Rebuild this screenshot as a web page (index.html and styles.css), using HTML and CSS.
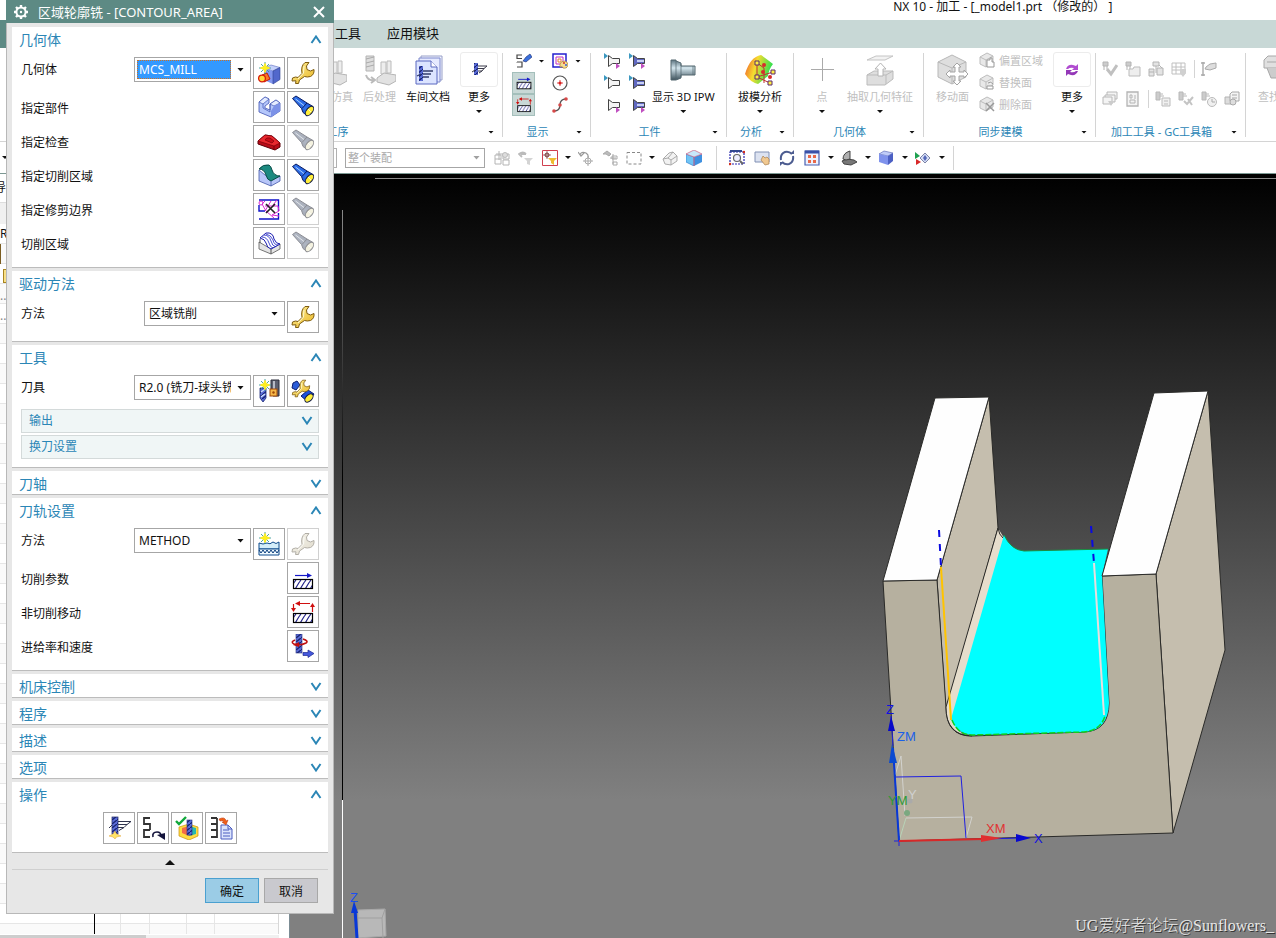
FILE: index.html
```
<!DOCTYPE html>
<html lang="zh-CN">

<head>
  <meta charset="UTF-8">
  <title>NX 10 - 加工</title>
  <link rel="stylesheet" href="styles.css">
</head>

<body>
  <svg class="sprite" aria-hidden="true">
    <defs>
      <linearGradient id="gold" x1="0" y1="0" x2="1" y2="1">
        <stop offset="0" stop-color="#fff2a0" />
        <stop offset="1" stop-color="#e8b420" />
      </linearGradient>
      <linearGradient id="barrel" x1="0" y1="1" x2="1" y2="0">
        <stop offset="0" stop-color="#0a2a9a" />
        <stop offset="0.5" stop-color="#2f72ec" />
        <stop offset="1" stop-color="#0e3cc0" />
      </linearGradient>
      <linearGradient id="steel" x1="0" y1="0" x2="0" y2="1">
        <stop offset="0" stop-color="#5c7480" />
        <stop offset="0.4" stop-color="#d4e6ee" />
        <stop offset="1" stop-color="#3e525c" />
      </linearGradient>
      <linearGradient id="rainbow" x1="0" y1="0" x2="1" y2="0.3">
        <stop offset="0" stop-color="#f04a2a" />
        <stop offset="0.45" stop-color="#f6dc30" />
        <stop offset="1" stop-color="#2ee050" />
      </linearGradient>
      <pattern id="hatch" width="5" height="8" patternUnits="userSpaceOnUse">
        <path d="M-2 9L4 -1M3 9L9 -1" stroke="#22228a" stroke-width="1.1" />
      </pattern>
      <pattern id="thread" width="5" height="4" patternUnits="userSpaceOnUse">
        <rect width="5" height="4" fill="#5a6cd8" />
        <path d="M0 4L5 0" stroke="#14206e" stroke-width="1.3" />
      </pattern>

      <symbol id="up" viewBox="0 0 12 9"><path d="M1.500 8L6 1.500L10.500 8" fill="none" stroke="#2b86b6" stroke-width="2" /></symbol>
      <symbol id="down" viewBox="0 0 12 9"><path d="M1.500 1L6 7.500L10.500 1" fill="none" stroke="#2b86b6" stroke-width="2" /></symbol>
      <symbol id="gear" viewBox="0 0 16 16">
        <circle cx="8" cy="8" r="4.600" fill="none" stroke="#fff" stroke-width="2" />
        <circle cx="8" cy="8" r="1.200" fill="#fff" />
        <path d="M8 1v2M8 13v2M1 8h2M13 8h2M3 3l1.500 1.500M11.500 11.500L13 13M3 13l1.500-1.500M11.500 4.500L13 3" stroke="#fff" stroke-width="2.400" />
      </symbol>
      <symbol id="close" viewBox="0 0 12 12"><path d="M1 1L11 11M11 1L1 11" stroke="#fff" stroke-width="2" /></symbol>

      <symbol id="spark" viewBox="0 0 12 12">
        <path d="M6 0v12M0 6h12M2 2l8 8M10 2l-8 8" stroke="#3a9a9a" stroke-width="0.900" />
        <path d="M6 1.500L7.200 4.500L10.500 6L7.200 7.500L6 10.500L4.800 7.500L1.500 6L4.800 4.500Z" fill="#ffee20" stroke="#ffee20" />
      </symbol>
      <symbol id="wrench" viewBox="0 0 24 24">
        <path d="M14 1.500L18 1.500L15.500 5L16 8.500L19.500 10L23 8.500Q23.500 13.500 19.500 15.500Q16 16.500 13.500 15.500L8.500 19L7.500 22.500L4.500 22.500L5 19.800L1 20L1.500 17L4.500 16L7 16.500L11 12.500Q9.500 5 14 1.500Z" fill="url(#gold)" stroke="#7e5c10" />
        <path d="M13 5L12.500 12L7 18" fill="none" stroke="#fffbd0" />
      </symbol>
      <symbol id="torch" viewBox="0 0 24 24">
        <path d="M1.500 3.500L5 1L16 8L22 11.500L16 20.500L12 17.500L10.500 13.500Z" fill="url(#barrel)" stroke="#0a1c60" />
        <path d="M4.500 4L13 10.500" stroke="#a8d0ff" />
        <path d="M11 13.500L16 8" stroke="#0a1c60" />
        <ellipse cx="18.500" cy="16" rx="3" ry="5.500" transform="rotate(38 18.500 16)" fill="#ffee3a" stroke="#141c40" />
        <path d="M17 14L20 17" stroke="#fffdc8" />
      </symbol>
      <symbol id="newgeom" viewBox="0 0 24 24">
        <path d="M7 7L14 4L23 6.500L16 10Z" fill="#c4d0fa" stroke="#5a6cc0" stroke-width="0.600" />
        <path d="M7 7L16 10V23L7 19Z" fill="#8296ee" />
        <path d="M16 10L23 6.500V18.500L16 23Z" fill="#5268cc" stroke="#2e4090" stroke-width="0.600" />
        <path d="M5 14L10 12L13 18L7 21Z" fill="#f87820" stroke="#c41808" />
        <circle cx="5" cy="17.500" r="3.400" fill="#ffd838" stroke="#d81c08" stroke-width="1.300" />
        <use href="#spark" x="2" y="1" width="12" height="12" />
      </symbol>
      <symbol id="part" viewBox="0 0 24 24">
        <path d="M2 7L8 2L12 4V8L8 11V13L13 15V9L19 5L23 8V16L14 22L2 17Z" fill="#b4c6fa" stroke="#4054b4" stroke-width="0.800" />
        <path d="M2 7L6 9L12 4L8 2ZM13 9L17 11L23 8L19 5Z" fill="#e4ecff" stroke="#4054b4" stroke-width="0.700" />
        <path d="M14 22V16L17 11L23 8V16Z" fill="#7c92e8" />
        <path d="M6 9V13L13 17V9" fill="none" stroke="#4054b4" stroke-width="0.700" />
      </symbol>
      <symbol id="check" viewBox="0 0 24 24">
        <path d="M1 12L8 6L15 7L23 14V18L18 21L1 15Z" fill="#b80c18" stroke="#5e0008" />
        <path d="M1 12L8 6L15 7L23 14L17 17Z" fill="#e8282e" stroke="#7a0008" stroke-width="0.700" />
        <path d="M8 11Q9 8 13 9L17 12L15 14Z" fill="#c80c18" stroke="#7a0008" stroke-width="0.700" />
        <path d="M17 17V21" stroke="#7a0008" />
      </symbol>
      <symbol id="surface" viewBox="0 0 24 24">
        <path d="M2 7V18L14 23L23 18V13L14 17Z" fill="#b8c6f8" stroke="#4458a8" stroke-width="0.800" />
        <path d="M2 6Q6 1 12 2Q14 3 15 7Q17 13 23 13L14 18Q10 17 9 12Q7 6 2 6Z" fill="#1c8a80" stroke="#0c4c48" />
        <path d="M14 18V23" stroke="#4458a8" stroke-width="0.800" />
      </symbol>
      <symbol id="trim" viewBox="0 0 24 24">
        <path d="M2 3H21.500V14M2 8V14H8M2 22H21.500V16" fill="none" stroke="#0c10c8" stroke-width="1.400" />
        <path d="M5 7L9 14L17 21M8 4L5 7M14 4L8 14M20 3L16 8M8 9H21L22 14L15 18L22 19" fill="none" stroke="#d828d0" />
        <circle cx="4" cy="6" r="2" fill="none" stroke="#d828d0" />
        <path d="M9 7L18 16M18 7L9 16" stroke="#222" stroke-width="1.600" />
      </symbol>
      <symbol id="region" viewBox="0 0 24 24">
        <path d="M2 11L2 18L14 23L23 18V13L14 18Z" fill="#e4e4e4" stroke="#555" stroke-width="0.800" />
        <path d="M3 7L9 2Q16 1 17 8Q19 13 23 13L14 18Q10 17 9 12Q8 8 3 7Z" fill="#fff" stroke="#1c1cb0" />
        <path d="M5 6Q10 6 12 12Q13 16 16 17M7 4Q12 4 14 10Q15 15 19 16M9 3Q14 4 16 9Q17 14 21 14" fill="none" stroke="#1c24c8" stroke-width="0.800" />
        <path d="M3 8V12M14 18V23" stroke="#555" />
      </symbol>
      <symbol id="newtool" viewBox="0 0 24 24">
        <path d="M14 1H22V17H16V11H14Z" fill="#5c6070" stroke="#2a2c3a" />
        <path d="M17 2V10" stroke="#cdd2dd" stroke-width="1.600" />
        <rect x="13" y="10" width="7" height="7" fill="#f6b848" stroke="#a04808" />
        <circle cx="16.500" cy="13.500" r="1.200" fill="#a04808" />
        <path d="M3 9H9V19L6 23L3 19Z" fill="url(#thread)" stroke="#1c2a78" stroke-width="0.800" />
        <path d="M4 13L8 10M4 18L8 15" stroke="#cfe0ff" stroke-width="1.500" />
        <use href="#spark" x="2" y="0" width="12" height="12" />
      </symbol>
      <symbol id="tooledit" viewBox="0 0 24 24">
        <path d="M2 4L6 2L9 6L5 11L1 9Z" fill="#2a5cd8" stroke="#0c1e70" />
        <path d="M10 17L17 11L23 15L17 23Z" fill="#1c50dc" stroke="#0c1e70" />
        <ellipse cx="18" cy="19" rx="3" ry="5" transform="rotate(45 18 19)" fill="#ffee3a" stroke="#141c40" />
        <use href="#wrench" x="0" y="0" width="20" height="19" />
      </symbol>
      <symbol id="newmethod" viewBox="0 0 24 24">
        <path d="M2 11V17H22V10Q19 13 16 10Q13 13 10 11Q6 13 2 11Z" fill="#d4eefa" stroke="#0c4a8c" />
        <path d="M2 17H22V23H2Z" fill="#f0faff" stroke="#0c4a8c" />
        <path d="M2 18L4 21L6 18L8 21L10 18L12 21L14 18L16 21L18 18L20 21L22 18" fill="none" stroke="#083c7c" />
        <use href="#spark" x="2" y="0" width="12" height="12" />
      </symbol>
      <symbol id="cutparam" viewBox="0 0 24 24">
        <path d="M4 9.500H18" stroke="#1418c8" stroke-width="1.200" /><path d="M16 7L21 9.500L16 12Z" fill="#1418c8" />
        <rect x="2.500" y="13.500" width="19" height="9" fill="#fff" /><rect x="2.500" y="13.500" width="19" height="9" fill="url(#hatch)" stroke="#000" stroke-width="1.200" />
      </symbol>
      <symbol id="noncut" viewBox="0 0 24 24">
        <path d="M6 3.500H19M2.500 4V9M21.500 12V6" stroke="#d01010" stroke-width="1.200" />
        <path d="M9 1L4 3.500L9 6ZM0 8H5L2.500 12ZM19 7H24L21.500 3Z" fill="#d01010" />
        <rect x="2.500" y="13.500" width="19" height="9" fill="#fff" /><rect x="2.500" y="13.500" width="19" height="9" fill="url(#hatch)" stroke="#000" stroke-width="1.200" />
      </symbol>
      <symbol id="speed" viewBox="0 0 24 24">
        <rect x="5" y="0" width="6" height="19" fill="url(#thread)" stroke="#26307c" stroke-width="0.600" />
        <path d="M4 6Q-1 8 3 10Q9 12 15 9Q18 7 12 5" fill="none" stroke="#c01010" stroke-width="1.600" />
        <path d="M2 11L8 8V13Z" fill="#c01010" />
        <path d="M12 18.500H17V16L23 19.500L17 23.500V21.500H12Z" fill="#4458dc" stroke="#1c2890" stroke-width="0.700" />
      </symbol>
      <symbol id="generate" viewBox="0 0 24 24">
        <rect x="5" y="1" width="6" height="17" fill="url(#thread)" stroke="#1c2460" stroke-width="0.700" />
        <path d="M11 5.500H24L20 8.500H11M20 8.500L17 11.500H11M17 11.500L12 14.500M2 12L5 9" fill="none" stroke="#30344e" />
        <path d="M8 15L9.500 18L14 20L9.500 21L8 23L6 21L2 20L6 18Z" fill="#ffe468" stroke="#e0a030" stroke-width="0.500" />
      </symbol>
      <symbol id="replay" viewBox="0 0 24 24">
        <path d="M9 2H3V8H9V14M9 14H3V21H9M9 8V14" fill="none" stroke="#333" stroke-width="1.800" />
        <path d="M12 21Q11 16 16 16Q20 16 20 20" fill="none" stroke="#14143c" stroke-width="1.600" />
        <path d="M16 19L24 17V24Z" fill="#14143c" />
      </symbol>
      <symbol id="verify" viewBox="0 0 24 24">
        <path d="M4 11L14 8L23 11V20L14 24L4 20Z" fill="#ffdc40" stroke="#c89010" stroke-width="0.700" />
        <path d="M7 12L14 10V20L7 17Z" fill="#f46c48" /><path d="M14 10L21 12V18L14 20Z" fill="#28b8b0" />
        <rect x="12" y="4" width="5" height="15" fill="url(#thread)" stroke="#26307c" stroke-width="0.600" />
        <path d="M1 5L4 8L11 1" fill="none" stroke="#10a83a" stroke-width="2.400" />
      </symbol>
      <symbol id="list" viewBox="0 0 24 24">
        <path d="M8 2H2M8 8H2M8 2V8M8 8V14H2M8 14V21H2" fill="none" stroke="#333" stroke-width="1.800" />
        <path d="M12 9H19L23 13V23H12Z" fill="#dce4fc" stroke="#4a5cc0" />
        <path d="M19 9V13H23M14 14H20M14 17H21M14 20H21" fill="none" stroke="#4a5cc0" />
        <path d="M10 3Q16 0 17 5L19 4L17 9L13 6H15Q14 4 11 5Z" fill="#f06018" stroke="#b83008" stroke-width="0.500" />
      </symbol>

      <symbol id="post" viewBox="0 0 32 32">
        <path d="M2 2H10V17H2Z" fill="#ddd" stroke="#b4b4b4" /><path d="M2 5L10 3M2 9L10 7M2 13L10 11" stroke="#aaa" />
        <path d="M2 21Q4 27 10 26M7 23L11 26L7 29" fill="none" stroke="#bbb" stroke-width="2" />
        <path d="M17 8H22V20H17ZM23 7H27V19H23Z" fill="#eee" stroke="#bbb" /><path d="M13 24L20 19L32 21V27L25 31L13 28Z" fill="#e2e2e2" stroke="#b4b4b4" />
      </symbol>
      <symbol id="shopdoc" viewBox="0 0 32 32">
        <path d="M9 2H30V26H9Z" fill="#f2f4ff" stroke="#98a0c8" /><path d="M7 4H28V28H7Z" fill="#e6eaff" stroke="#7c88cc" />
        <path d="M4 7H19L25 13V30H4Z" fill="#dce4ff" stroke="#5a68c0" /><path d="M19 7V13H25" fill="#fff" stroke="#5a68c0" />
        <rect x="7" y="12" width="4" height="15" fill="url(#thread)" /><path d="M11 17H21M11 20H19M11 23H17M5 22L9 20" stroke="#333c6c" stroke-width="1.300" />
      </symbol>
      <symbol id="moreops" viewBox="0 0 16 16">
        <rect x="3" y="1" width="4" height="12" fill="url(#thread)" /><path d="M7 4H16L13 6.500H7M13 6.500L11 9H7M11 9L8 11M1 10L4 8" fill="none" stroke="#3a3a4a" />
      </symbol>
      <symbol id="pathshow" viewBox="0 0 16 16">
        <path d="M6 2H1V5.500H6M1 9H6V14H1M1 9V9.500M1 14H6" fill="none" stroke="#444" stroke-width="1.200" />
        <path d="M7 8L10 4L14 1L16 4L10 9Z" fill="#3a70dc" stroke="#1c2c70" stroke-width="0.600" />
      </symbol>
      <symbol id="palette" viewBox="0 0 16 16">
        <path d="M1 1H14V14H1Z" fill="#fff" stroke="#2420d0" stroke-width="1.500" /><path d="M4 4H11V11H4Z" fill="none" stroke="#c030c0" />
        <path d="M6 6H9V9H6Z" fill="none" stroke="#e08030" /><path d="M8 11Q9 8 13 8Q16 9 16 12Q15 16 11 15Q11 13 8 14Z" fill="#f4dc90" stroke="#a88430" stroke-width="0.700" />
        <circle cx="12" cy="10" r="0.900" fill="#d02020" /><circle cx="14" cy="12" r="0.900" fill="#2050e0" />
      </symbol>
      <symbol id="target" viewBox="0 0 16 16">
        <circle cx="8" cy="8" r="7" fill="#fff" stroke="#555" stroke-width="1.200" /><path d="M5 8H11M8 5V11" stroke="#e04848" /><circle cx="8" cy="8" r="1.500" fill="#d82020" />
      </symbol>
      <symbol id="spline" viewBox="0 0 16 16">
        <path d="M2 14Q8 14 8 8Q8 2 14 2" fill="none" stroke="#555" stroke-width="1.300" />
        <circle cx="2" cy="14" r="1.800" fill="#d84848" /><circle cx="8" cy="8" r="1.800" fill="#d84848" /><circle cx="14" cy="2" r="1.800" fill="#d84848" />
      </symbol>
      <symbol id="funnel" viewBox="0 0 16 16"><path d="M4.500 2.500L8.500 5.500H15.500V10.500H8.500L4.500 13.500Z" fill="#f4f4f4" stroke="#444" /></symbol>
      <symbol id="funnelfill" viewBox="0 0 16 16"><path d="M4.500 2.500L8.500 5.500H15.500V10.500H8.500L4.500 13.500Z" fill="#6068c0" stroke="#444" /><path d="M8 8H15" stroke="#c8d0f4" stroke-width="2" /></symbol>
      <symbol id="mark-in" viewBox="0 0 16 16"><path d="M0 0L4 3L0 6Z" fill="#3c98c0" /></symbol>
      <symbol id="mark-out" viewBox="0 0 16 16"><path d="M12 10L16 13L12 16Z" fill="#c050c0" /></symbol>
      <symbol id="ipw" viewBox="0 0 32 32"><path d="M4 6H9V7L14 9V12H28V21H14V24L9 26H4Z" fill="url(#steel)" stroke="#52666f" /><path d="M9 7V26M14 10V23M26 12V21" stroke="#52666f" stroke-width="0.700" /></symbol>
      <symbol id="draft" viewBox="0 0 32 32">
        <path d="M1 20Q6 3 17 1Q24 6 29 10Q25 15 24 22L14 30Q6 28 1 20Z" fill="url(#rainbow)" />
        <path d="M13 9V23M13 23L29 18M13 23L26 29M13 9L20 14V29" fill="none" stroke="#c03030" />
        <path d="M11 7H15V11H11ZM11 21H15V25H11ZM27 16H31V20H27ZM24 27H28V31H24Z" fill="#fff040" stroke="#5a2a70" />
        <circle cx="20" cy="11" r="2" fill="#d82c2c" /><circle cx="19" cy="18" r="2" fill="#d82c2c" /><circle cx="26" cy="23" r="2" fill="#d82c2c" />
      </symbol>
      <symbol id="plus" viewBox="0 0 32 32"><path d="M16.500 4V27M5 15.500H28" stroke="#aaa" /></symbol>
      <symbol id="extract" viewBox="0 0 32 32">
        <path d="M3 6L12 2H29L21 6Z" fill="#f2f2f2" stroke="#c4c4c4" /><path d="M3 21L10 17H29V25L21 31H3Z" fill="#dedede" stroke="#bbb" />
        <path d="M3 21H22L29 17M22 21V30" fill="none" stroke="#bbb" /><path d="M14 22V15H11L16.500 9L22 15H19V22Z" fill="#fff" stroke="#b4b4b4" />
      </symbol>
      <symbol id="graycube" viewBox="0 0 16 16">
        <path d="M1 5L8 1L14 4V11L7 15L1 12Z" fill="#e8e8e8" stroke="#bdbdbd" /><path d="M1 5L7 8L14 4M7 8V15" fill="none" stroke="#bdbdbd" />
      </symbol>
      <symbol id="movecube" viewBox="0 0 32 32">
        <path d="M1 8L15 1L29 8V23L15 30L1 23Z" fill="#dedede" stroke="#b8b8b8" /><path d="M1 8L15 14L29 8M15 14V30" fill="none" stroke="#b8b8b8" />
        <path d="M20 9L24 13H22V18H27V16L31 20L27 24V22H22V27H24L20 31L16 27H18V22H13V24L9 20L13 16V18H18V13H16Z" fill="#fff" stroke="#a4a4a4" />
      </symbol>
      <symbol id="cyclepurple" viewBox="0 0 16 16">
        <path d="M2 7Q4 2 9 3L12 4L14 2V8H8L10 6Q6 5 4 7Z" fill="#b04cd0" /><path d="M14 9Q12 14 7 13L4 12L2 14V8H8L6 10Q10 11 12 9Z" fill="#9438b8" />
      </symbol>
      <symbol id="g1" viewBox="0 0 16 16"><path d="M1 1H6V5H1ZM2 5V9M5 5V8" fill="#ccc" stroke="#b4b4b4" /><path d="M5 8L9 13L15 4" fill="none" stroke="#c0c0c0" stroke-width="3" /></symbol>
      <symbol id="g2" viewBox="0 0 16 16"><path d="M1 1H6V5H1ZM2 5V9M5 5V8" fill="#ccc" stroke="#b4b4b4" /><path d="M4 8H8L9 6H15V15H4Z" fill="#eee" stroke="#bbb" /></symbol>
      <symbol id="g3" viewBox="0 0 16 16"><path d="M5 1H11V5H5ZM1 8H6V15H1ZM9 7H15V14H9Z" fill="#e4e4e4" stroke="#b4b4b4" /><path d="M8 5V12M1 11H6M11 4L14 7" stroke="#b4b4b4" /></symbol>
      <symbol id="g4" viewBox="0 0 16 16"><path d="M1 2H14V13H1ZM1 6H14M1 9H14M5 2V13M10 2V13" fill="none" stroke="#c0c0c0" /><path d="M9 8H15V12L12 16L9 12Z" fill="#d0d0d0" /></symbol>
      <symbol id="g5" viewBox="0 0 16 16"><path d="M2 1V15M0 2H4M0 14H4" stroke="#aaa" stroke-width="1.400" /><path d="M5 6L9 3L15 2V7L9 9L4 8Z" fill="#ddd" stroke="#aaa" /></symbol>
      <symbol id="g6" viewBox="0 0 16 16"><path d="M5 1H15V8H5Z" fill="#f4f4f4" stroke="#b8b8b8" /><path d="M3 4H13V11H3Z" fill="#f4f4f4" stroke="#b8b8b8" /><path d="M1 6H10V13H1Z" fill="#f4f4f4" stroke="#b8b8b8" /><path d="M6 10H12L9 15Z" fill="#ccc" /></symbol>
      <symbol id="g7" viewBox="0 0 16 16"><path d="M2 1H13V15H2Z" fill="#f4f4f4" stroke="#b4b4b4" stroke-width="1.300" /><path d="M5 4H7V7H5ZM9 5H11M9 7H11M5 9H10V12H5Z" fill="none" stroke="#b4b4b4" /></symbol>
      <symbol id="g8" viewBox="0 0 16 16"><path d="M1 1H5V9H1ZM5 5H9M5 3H8" fill="#ccc" stroke="#b8b8b8" /><path d="M7 7H15V15H7ZM9 10H13M9 13H13" fill="#f0f0f0" stroke="#bbb" /></symbol>
      <symbol id="g9" viewBox="0 0 16 16"><path d="M1 1H5V9H1ZM5 5H9M5 3H8" fill="#ccc" stroke="#b8b8b8" /><path d="M6 10L9 13L15 6M10 8L14 14" fill="none" stroke="#c4c4c4" stroke-width="2" /></symbol>
      <symbol id="g10" viewBox="0 0 16 16"><path d="M1 1H5V9H1ZM5 5H9M5 3H8" fill="#ccc" stroke="#b8b8b8" /><circle cx="11" cy="11" r="4.500" fill="#f0f0f0" stroke="#bbb" /><path d="M11 8V11H14" fill="none" stroke="#aaa" /></symbol>
      <symbol id="g11" viewBox="0 0 16 16"><path d="M1 6H7V13H1Z" fill="#ddd" stroke="#b4b4b4" /><path d="M8 1H15V10H6V3ZM8 4H13M8 7H13" fill="#f4f4f4" stroke="#a8a8a8" /><circle cx="9" cy="11" r="3" fill="#ddd" stroke="#aaa" /></symbol>
      <symbol id="find" viewBox="0 0 32 32"><path d="M6 2H20V14H2V6Z" fill="#e0e0e0" stroke="#a8a8a8" /><path d="M5 8H20M5 14L9 24H15V14" fill="#ccc" stroke="#a8a8a8" /></symbol>

      <symbol id="s1" viewBox="0 0 16 16"><path d="M1 5H7V14H1ZM1 9H7M5 1V10M2 4H9M9 4H15V9H9ZM9 10H15V15H9Z" fill="none" stroke="#b4b4b4" /><circle cx="11" cy="5" r="2.500" fill="#ddd" stroke="#bbb" /></symbol>
      <symbol id="s2" viewBox="0 0 16 16"><path d="M8 4Q5 1 1 4L4 7M3 4H8" fill="none" stroke="#bbb" stroke-width="1.800" /><path d="M6 8H15L12 11V15L9 14V11Z" fill="#d4d4d4" /></symbol>
      <symbol id="s3" viewBox="0 0 16 16"><path d="M0.500 0.500H15.500V15.500H0.500Z" fill="#fff" stroke="#d04050" /><circle cx="5" cy="5" r="2" fill="none" stroke="#733" /><path d="M5 1V9M1 5H9" stroke="#733" stroke-width="0.700" /><path d="M6 8H15L12 11V15L9 13V11Z" fill="#f0bc30" /></symbol>
      <symbol id="s4" viewBox="0 0 16 16"><path d="M2 5Q3 1 8 3Q11 5 10 8M0 2L3 6L6 3" fill="none" stroke="#999" stroke-width="1.200" /><circle cx="10" cy="11" r="3" fill="none" stroke="#aaa" /><path d="M10 6V16M5 11H15" stroke="#aaa" /></symbol>
      <symbol id="s5" viewBox="0 0 16 16"><path d="M1 4L5 1L9 4L7 6L4 4Z" fill="#bbb" stroke="#aaa" /><path d="M11 4V14M8 8H14M10 6H15V9H10ZM11 12H15V15H11Z" fill="none" stroke="#aaa" /></symbol>
      <symbol id="s6" viewBox="0 0 16 16"><path d="M1 2.500H15V14H1Z" fill="none" stroke="#888" stroke-dasharray="3 2" /></symbol>
      <symbol id="s7" viewBox="0 0 16 16"><path d="M1 9L7 3L11 2L15 6V11L9 15L3 14Z" fill="#f2f2f2" stroke="#aaa" /><path d="M1 9L6 8L11 2M6 8L9 10L15 6M9 10V15" fill="none" stroke="#aaa" /></symbol>
      <symbol id="s8" viewBox="0 0 16 16"><path d="M0 4L8 7V16L0 12Z" fill="#70c4f4" stroke="#3080d0" stroke-width="0.700" /><path d="M8 7L16 4V12L8 16Z" fill="#3f90e0" /><path d="M0 4L8 0L16 4L8 7Z" fill="#c8e8fa" stroke="#d06080" stroke-width="0.700" /><path d="M8 7V16" stroke="#d06080" /></symbol>
      <symbol id="s9" viewBox="0 0 16 16"><path d="M1 2H15V14H1Z" fill="none" stroke="#2828b0" stroke-dasharray="2 1" stroke-width="1.200" /><path d="M1 1H13" stroke="#334890" stroke-width="2" /><circle cx="8" cy="8" r="3.500" fill="#eef" stroke="#666" stroke-width="1.200" /><path d="M11 11L14 14" stroke="#666" stroke-width="2" /><circle cx="15" cy="2" r="1.300" fill="#d03020" /><circle cx="1" cy="14" r="1.300" fill="#d03020" /></symbol>
      <symbol id="s10" viewBox="0 0 16 16"><path d="M1 2H15V12H1Z" fill="#dce2f0" stroke="#8090b4" /><path d="M7 10L9 6L11 8L13 7L15 9V14L11 15Z" fill="#f0c890" stroke="#a88050" stroke-width="0.700" /></symbol>
      <symbol id="s11" viewBox="0 0 16 16"><path d="M2 10Q1 4 6 2Q10 1 13 4M14 6Q15 12 10 14Q6 15 3 12" fill="none" stroke="#4c5c90" stroke-width="2" /><path d="M11 4H15V0ZM5 12H1V16Z" fill="#4c5c90" /></symbol>
      <symbol id="s12" viewBox="0 0 16 16"><path d="M1 1H15V15H1Z" fill="#eef2ff" stroke="#4860b0" stroke-width="1.200" /><path d="M1 2H15" stroke="#3850a8" stroke-width="3" /><path d="M4 5H7V8H4ZM9 5H12V8H9ZM4 10H7V13H4ZM9 10H12V13H9Z" fill="#e86848" /></symbol>
      <symbol id="s13" viewBox="0 0 16 16"><path d="M1 11L6 9L13 10L16 12L10 15L3 14Z" fill="#777" stroke="#444" /><path d="M2 9Q2 3 9 1L9 9L5 10Z" fill="#b0b0b0" stroke="#444" /></symbol>
      <symbol id="s14" viewBox="0 0 16 16"><path d="M1 4L6 1L15 3L10 6Z" fill="#c0ccf8" stroke="#5060b0" stroke-width="0.600" /><path d="M1 4L10 6V15L1 12Z" fill="#7f92ec" /><path d="M10 6L15 3V11L10 15Z" fill="#4c60c4" /></symbol>
      <symbol id="s15" viewBox="0 0 16 16"><path d="M0 2L5 6L0 9Z" fill="#20a050" /><path d="M1 9L6 12L1 15Z" fill="#d82828" /><path d="M5 8L10 3L15 8L10 13Z" fill="#d4dcf4" stroke="#7c84a8" /><path d="M8 8L10 5L12 8L10 11Z" fill="#5468b8" /></symbol>
    </defs>
  </svg>

  <header class="titlebar">NX 10 - 加工 - [_model1.prt （修改的） ]</header>
  <nav class="tabs">
    <span class="tabs-file"></span>
    <a class="tab tab-first" href="#">工具</a>
    <a class="tab" href="#">应用模块</a>
  </nav>

  <div class="ribbon">
    <section class="group group-hidden"></section>
    <section class="group group-ops">
      <div class="group-body group-body_end">
        <button class="tool" disabled><svg class="i32"><use href="#post" /></svg>机床仿真</button>
        <button class="tool" disabled><svg class="i32"><use href="#post" /></svg>后处理</button>
        <button class="tool"><svg class="i32"><use href="#shopdoc" /></svg>车间文档</button>
        <button class="tool tool-more"><span class="more-box"><svg class="i16"><use href="#moreops" /></svg></span>更多<i class="caret"></i></button>
      </div>
      <div class="group-foot"><span>工序</span><i class="caret"></i></div>
    </section>
    <section class="group group-show">
      <div class="group-body">
        <div class="show-grid">
          <button class="mini" aria-label="显示刀轨"><svg class="i16"><use href="#pathshow" /></svg></button><i class="caret"></i>
          <button class="mini" aria-label="颜色"><svg class="i16"><use href="#palette" /></svg></button><i class="caret"></i>
          <button class="mini mini-on" aria-label="切削"><svg class="i16" viewBox="1 5 22 19"><use href="#cutparam" width="24" height="24" /></svg></button><i></i>
          <button class="mini" aria-label="点"><svg class="i16"><use href="#target" /></svg></button><i></i>
          <button class="mini mini-on" aria-label="非切削"><svg class="i16" viewBox="0 1 24 23"><use href="#noncut" width="24" height="24" /></svg></button><i></i>
          <button class="mini" aria-label="曲线"><svg class="i16"><use href="#spline" /></svg></button><i></i>
        </div>
      </div>
      <div class="group-foot"><span>显示</span><i class="caret"></i></div>
    </section>
    <section class="group group-work">
      <div class="group-body">
        <div class="work-grid">
          <button class="mini" aria-label="工件 1"><svg class="i16"><use href="#funnel" /><use href="#mark-in" /><use href="#mark-out" /></svg></button>
          <button class="mini" aria-label="工件 2"><svg class="i16"><use href="#funnelfill" /><use href="#mark-in" /><use href="#mark-out" /></svg></button>
          <button class="mini" aria-label="工件 3"><svg class="i16"><use href="#funnel" /><use href="#mark-in" /></svg></button>
          <button class="mini" aria-label="工件 4"><svg class="i16"><use href="#funnelfill" /><use href="#mark-in" /></svg></button>
          <button class="mini" aria-label="工件 5"><svg class="i16"><use href="#funnel" /><use href="#mark-out" /></svg></button>
          <button class="mini" aria-label="工件 6"><svg class="i16"><use href="#funnelfill" /><use href="#mark-out" /></svg></button>
        </div>
        <button class="tool"><svg class="i32"><use href="#ipw" /></svg>显示 3D IPW<i class="caret"></i></button>
      </div>
      <div class="group-foot"><span>工件</span><i class="caret"></i></div>
    </section>
    <section class="group group-analysis">
      <div class="group-body group-body_center">
        <button class="tool"><svg class="i32"><use href="#draft" /></svg>拔模分析<i class="caret"></i></button>
      </div>
      <div class="group-foot"><span>分析</span><i class="caret"></i></div>
    </section>
    <section class="group group-geom">
      <div class="group-body">
        <button class="tool tool-point" disabled><svg class="i32"><use href="#plus" /></svg>点<i class="caret"></i></button>
        <button class="tool" disabled><svg class="i32"><use href="#extract" /></svg>抽取几何特征<i class="caret"></i></button>
      </div>
      <div class="group-foot"><span>几何体</span><i class="caret"></i></div>
    </section>
    <section class="group group-sync">
      <div class="group-body">
        <button class="tool" disabled><svg class="i32"><use href="#movecube" /></svg>移动面</button>
        <div class="sync-list">
          <button disabled><svg class="i16"><use href="#graycube" /><path d="M8 8H11V6H13V10H15V15H8Z" fill="#fff" stroke="#999" /></svg>偏置区域</button>
          <button disabled><svg class="i16"><use href="#graycube" /><path d="M8 12H14V15H8ZM9 9Q12 7 14 10" fill="#fff" stroke="#999" /></svg>替换面</button>
          <button disabled><svg class="i16"><use href="#graycube" /><path d="M7 7L15 15M15 7L7 15" stroke="#999" stroke-width="1.500" /></svg>删除面</button>
        </div>
        <button class="tool tool-more"><span class="more-box"><svg class="i16"><use href="#cyclepurple" /></svg></span>更多<i class="caret"></i></button>
      </div>
      <div class="group-foot"><span>同步建模</span><i class="caret"></i></div>
    </section>
    <section class="group group-gc">
      <div class="group-body gc-rows">
        <div class="gc-row">
          <svg class="i16"><use href="#g1" /></svg><svg class="i16"><use href="#g2" /></svg><svg class="i16"><use href="#g3" /></svg><svg class="i16"><use href="#g4" /></svg><i class="gc-sep"></i><svg class="i16"><use href="#g5" /></svg>
        </div>
        <div class="gc-row">
          <svg class="i16"><use href="#g6" /></svg><svg class="i16"><use href="#g7" /></svg><i class="gc-sep"></i><svg class="i16"><use href="#g8" /></svg><svg class="i16"><use href="#g9" /></svg><svg class="i16"><use href="#g10" /></svg><svg class="i16"><use href="#g11" /></svg>
        </div>
      </div>
      <div class="group-foot"><span>加工工具 - GC工具箱</span><i class="caret"></i></div>
    </section>
    <section class="group group-find">
      <div class="group-body">
        <button class="tool tool-find" disabled><svg class="i32"><use href="#find" /></svg>查找</button>
      </div>
    </section>
  </div>

  <div class="selbar">
    <i class="caret"></i>
    <span class="selbar-prev"></span>
    <span class="combo combo-off"><select disabled aria-label="选择范围"><option>整个装配</option></select></span>
    <div class="selbar-icons">
      <svg class="i16"><use href="#s1" /></svg><svg class="i16"><use href="#s2" /></svg><svg class="i16"><use href="#s3" /></svg><i class="caret"></i><svg class="i16"><use href="#s4" /></svg><svg class="i16"><use href="#s5" /></svg><svg class="i16"><use href="#s6" /></svg><i class="caret"></i><svg class="i16"><use href="#s7" /></svg><svg class="i16"><use href="#s8" /></svg>
    </div>
    <div class="selbar-icons selbar-icons_view">
      <svg class="i16"><use href="#s9" /></svg><svg class="i16"><use href="#s10" /></svg><svg class="i16"><use href="#s11" /></svg><svg class="i16"><use href="#s12" /></svg><i class="caret"></i><svg class="i16"><use href="#s13" /></svg><i class="caret"></i><svg class="i16"><use href="#s14" /></svg><i class="caret"></i><svg class="i16"><use href="#s15" /></svg><i class="caret"></i>
    </div>
  </div>

  <main class="work">
    <aside class="navigator">
      <div class="nav-title">导</div>
      <div class="nav-head"></div>
      <div class="nav-rows">
        <div class="nav-row">R</div>
        <div class="nav-row nav-row_program"></div>
        <div class="nav-row nav-row_folder"></div>
        <div class="nav-row nav-row_dots">..</div>
        <div class="nav-row nav-row_dots">..</div>
        <div class="nav-cols"><i></i><i></i><i></i><i></i><i></i></div>
      </div>
      <div class="nav-scroll"></div>
    </aside>
    <div class="viewport">
      <svg class="scene" viewBox="290 174 986 764">
        <path d="M375 178.500H1276" stroke="#8a8a8a" />
        <linearGradient id="edge" x1="0" y1="210" x2="0" y2="480" gradientUnits="userSpaceOnUse">
          <stop offset="0" stop-color="#8a8a8a" />
          <stop offset="1" stop-color="#000" />
        </linearGradient>
        <rect x="342" y="210" width="1" height="590" fill="url(#edge)" />
        <rect x="342" y="800" width="1" height="138" fill="#fff" />

        <!-- part body -->
        <g stroke="#2a2a28" stroke-linejoin="round">
          <path d="M989 397L998 528L946 712L937 580Z" fill="#c5beae" />
          <path d="M1208 391L1225 650L1173 833L1156 574Z" fill="#c5beae" />
          <path d="M883 581L937 580L946 707Q946 736 972 736L1084 732Q1109 731 1109 703L1102 576L1156 574L1173 833L899 841Z" fill="#b6b09f" />
        </g>
        <path d="M998 528L1004 538L952 720L962 734Q946 728 946 707Z" fill="#e6ddcc" />
        <path d="M998 528L946 707M998 528Q999 535 1003 538M946 707Q946 736 972 736" fill="none" stroke="#2a2a28" />
        <path d="M1004 535Q1011 550 1024 551L1108 549L1102 576L1109 703Q1108 731 1084 732L972 735Q956 733 951 719Z" fill="#00ffff" />
        <path d="M1004 535Q1011 550 1024 551L1108 549" fill="none" stroke="#1c8c40" />
        <path d="M952 720Q958 735 972 735L1084 732Q1101 730 1105 716" fill="none" stroke="#10d020" stroke-width="1.500" stroke-dasharray="6 2" />
        <g fill="#fefefe" stroke="#2a2a28" stroke-linejoin="round">
          <path d="M935 398L989 397L937 580L883 581Z" />
          <path d="M1154 393L1208 391L1156 574L1102 576Z" />
        </g>
        <path d="M941 567L951 720" stroke="#ffc400" stroke-width="2" />
        <path d="M1094 563L1104 715" stroke="#e8dede" stroke-width="2" />
        <path d="M939 530L941 567M1091 526L1094 563" stroke="#0a0ae0" stroke-width="2" stroke-dasharray="7 7" />

        <!-- coordinate systems -->
        <g fill="none" stroke="#d2d2ce">
          <path d="M895 775L901 756L905 816M906 818L972 817L966 838" />
          <path d="M899 841L906 818" stroke="#b8d4b8" />
        </g>
        <path d="M896 777L961 776L966 838M891 716L893 746M894 841H904M899 836V846M984 839L1020 838" fill="none" stroke="#2020e0" />
        <path d="M893 748L899 841" stroke="#0838d8" stroke-width="2" />
        <path d="M892 744L889 763H897Z" fill="#0a4ad0" />
        <path d="M891 716L888 731H895Z" fill="#0808c8" />
        <path d="M899 841L984 839" stroke="#d82828" stroke-width="2" />
        <path d="M1002 838L981 835V842Z" fill="#e03030" />
        <path d="M1031 838L1016 834V842Z" fill="#0808d0" />
        <circle cx="910" cy="801" r="2.500" fill="#aaa" />
        <circle cx="907" cy="813" r="3" fill="#7aa880" />
        <g class="scene-text">
          <text x="886" y="714" fill="#1010e0">Z</text>
          <text x="897" y="741" fill="#1a60e8">ZM</text>
          <text x="888" y="805" fill="#2c9a38">YM</text>
          <text x="908" y="799" fill="#d0d0d0">Y</text>
          <text x="986" y="833" fill="#e03434">XM</text>
          <text x="1034" y="843" fill="#1010e0">X</text>
          <text x="350" y="902" fill="#1a50f0">Z</text>
        </g>

        <!-- view triad -->
        <path d="M358 910L385 909L386 936L358 938Z" fill="#b8b8b8" stroke="#a8a8a8" />
        <path d="M358 918L382 918L385 909M382 918L383 938" fill="none" stroke="#a0a0a0" />
        <path d="M355 910L357 938" stroke="#0838d8" stroke-width="3" />
        <path d="M354 901L351 913H358Z" fill="#0838d8" />
      </svg>
      <div class="watermark">UG爱好者论坛@Sunflowers_</div>
    </div>
  </main>

  <form class="dialog">
    <div class="dialog-title">
      <svg class="i16"><use href="#gear" /></svg>
      <span>区域轮廓铣 - [CONTOUR_AREA]</span>
      <button type="button" class="dialog-close" aria-label="关闭"><svg><use href="#close" /></svg></button>
    </div>
    <div class="dialog-body">
      <section class="panel">
        <h2>几何体<svg class="chev"><use href="#up" /></svg></h2>
        <div class="panel-body">
          <div class="row row-field">
            <label for="geometry">几何体</label>
            <span class="combo combo-focus"><select id="geometry"><option>MCS_MILL</option></select></span>
            <button type="button" class="btn" aria-label="新建几何体"><svg><use href="#newgeom" /></svg></button>
            <button type="button" class="btn" aria-label="编辑"><svg><use href="#wrench" /></svg></button>
          </div>
          <div class="row"><span>指定部件</span>
            <button type="button" class="btn" aria-label="指定部件"><svg><use href="#part" /></svg></button>
            <button type="button" class="btn" aria-label="显示"><svg><use href="#torch" /></svg></button>
          </div>
          <div class="row"><span>指定检查</span>
            <button type="button" class="btn" aria-label="指定检查"><svg><use href="#check" /></svg></button>
            <button type="button" class="btn" aria-label="显示" disabled><svg><use href="#torch" /></svg></button>
          </div>
          <div class="row"><span>指定切削区域</span>
            <button type="button" class="btn" aria-label="指定切削区域"><svg><use href="#surface" /></svg></button>
            <button type="button" class="btn" aria-label="显示"><svg><use href="#torch" /></svg></button>
          </div>
          <div class="row"><span>指定修剪边界</span>
            <button type="button" class="btn" aria-label="指定修剪边界"><svg><use href="#trim" /></svg></button>
            <button type="button" class="btn" aria-label="显示" disabled><svg><use href="#torch" /></svg></button>
          </div>
          <div class="row"><span>切削区域</span>
            <button type="button" class="btn" aria-label="切削区域"><svg><use href="#region" /></svg></button>
            <button type="button" class="btn" aria-label="显示" disabled><svg><use href="#torch" /></svg></button>
          </div>
        </div>
      </section>

      <section class="panel">
        <h2>驱动方法<svg class="chev"><use href="#up" /></svg></h2>
        <div class="panel-body">
          <div class="row row-field">
            <label for="drive">方法</label>
            <span class="combo combo-wide"><select id="drive"><option>区域铣削</option></select></span>
            <button type="button" class="btn" aria-label="编辑"><svg><use href="#wrench" /></svg></button>
          </div>
        </div>
      </section>

      <section class="panel">
        <h2>工具<svg class="chev"><use href="#up" /></svg></h2>
        <div class="panel-body">
          <div class="row row-field">
            <label for="cutter">刀具</label>
            <span class="combo"><select id="cutter"><option>R2.0 (铣刀-球头铣)</option></select></span>
            <button type="button" class="btn" aria-label="新建刀具"><svg><use href="#newtool" /></svg></button>
            <button type="button" class="btn" aria-label="编辑刀具"><svg><use href="#tooledit" /></svg></button>
          </div>
          <h3>输出<svg class="chev"><use href="#down" /></svg></h3>
          <h3>换刀设置<svg class="chev"><use href="#down" /></svg></h3>
        </div>
      </section>

      <section class="panel">
        <h2>刀轴<svg class="chev"><use href="#down" /></svg></h2>
      </section>

      <section class="panel">
        <h2>刀轨设置<svg class="chev"><use href="#up" /></svg></h2>
        <div class="panel-body">
          <div class="row row-field">
            <label for="method">方法</label>
            <span class="combo"><select id="method"><option>METHOD</option></select></span>
            <button type="button" class="btn" aria-label="新建方法"><svg><use href="#newmethod" /></svg></button>
            <button type="button" class="btn" aria-label="编辑" disabled><svg><use href="#wrench" /></svg></button>
          </div>
          <div class="row"><span>切削参数</span>
            <button type="button" class="btn" aria-label="切削参数"><svg><use href="#cutparam" /></svg></button>
          </div>
          <div class="row"><span>非切削移动</span>
            <button type="button" class="btn" aria-label="非切削移动"><svg><use href="#noncut" /></svg></button>
          </div>
          <div class="row"><span>进给率和速度</span>
            <button type="button" class="btn" aria-label="进给率和速度"><svg><use href="#speed" /></svg></button>
          </div>
        </div>
      </section>

      <section class="panel">
        <h2>机床控制<svg class="chev"><use href="#down" /></svg></h2>
      </section>
      <section class="panel">
        <h2>程序<svg class="chev"><use href="#down" /></svg></h2>
      </section>
      <section class="panel">
        <h2>描述<svg class="chev"><use href="#down" /></svg></h2>
      </section>
      <section class="panel">
        <h2>选项<svg class="chev"><use href="#down" /></svg></h2>
      </section>

      <section class="panel">
        <h2>操作<svg class="chev"><use href="#up" /></svg></h2>
        <div class="panel-body">
          <div class="actions">
            <button type="button" class="btn" aria-label="生成"><svg><use href="#generate" /></svg></button>
            <button type="button" class="btn" aria-label="重播"><svg><use href="#replay" /></svg></button>
            <button type="button" class="btn" aria-label="确认"><svg><use href="#verify" /></svg></button>
            <button type="button" class="btn" aria-label="列表"><svg><use href="#list" /></svg></button>
          </div>
        </div>
      </section>
      <div class="collapse"><i></i></div>
      <div class="dialog-foot">
        <button type="button" class="ok">确定</button>
        <button type="button" class="cancel">取消</button>
      </div>
    </div>
  </form>
</body>

</html>
```
FILE: styles.css
```
* {
  box-sizing: border-box;
}

body {
  margin: 0;
  min-height: 100vh;
  display: flex;
  flex-direction: column;
  position: relative;
  overflow-x: hidden;
  background: #fff;
  color: #111;
  font: 12px "Noto Sans", "Noto Sans CJK SC", sans-serif;
}

button,
select {
  font: inherit;
  color: inherit;
  margin: 0;
  padding: 0;
  border: 0;
  background: none;
}

svg {
  display: block;
  flex: none;
}

.sprite {
  position: absolute;
  width: 0;
  height: 0;
}

.i16 {
  width: 16px;
  height: 16px;
}

.i32 {
  width: 32px;
  height: 32px;
}

.caret {
  width: 6px;
  height: 3px;
  flex: none;
  background: #111;
  clip-path: polygon(0 0, 100% 0, 50% 100%);
}

/* 标题栏和选项卡 */
.titlebar {
  height: 20px;
  padding-left: 70%;
  line-height: 14px;
  white-space: pre;
}

.tabs {
  height: 28px;
  display: flex;
  align-items: center;
  background: #c8d8d6;
  font-size: 13px;
  line-height: 26px;
}

.tabs-file {
  width: 56px;
  height: 28px;
  background: #5d8a84;
}

.tab {
  height: 28px;
  color: #111;
  text-decoration: none;
  margin-right: 26px;
}

.tab-first {
  margin-left: 279px;
}

/* 功能区 */
.ribbon {
  height: 94px;
  display: flex;
  overflow: hidden;
  border-bottom: 1px solid #d4d4d4;
  font-size: 11px;
}

.group {
  flex: none;
  display: flex;
  flex-direction: column;
  margin: 5px 0 4px;
  border-right: 1px solid #d4d4d4;
}

.group-hidden {
  width: 191px;
}

.group-ops {
  width: 312px;
}

.group-show {
  width: 88px;
}

.group-work {
  width: 136px;
}

.group-analysis {
  width: 67px;
}

.group-geom {
  width: 130px;
}

.group-sync {
  width: 172px;
}

.group-gc {
  width: 150px;
}

.group-find {
  border: 0;
}

.group-body {
  flex: 1;
  display: flex;
  align-items: flex-start;
}

.group-body_end {
  justify-content: flex-end;
  gap: 10px;
  padding-right: 4px;
}

.group-body_center {
  justify-content: center;
}

.group-foot {
  height: 16px;
  margin-bottom: -3px;
  display: flex;
  align-items: center;
  color: #2b86b6;
  padding-right: 8px;
}

.group-foot span {
  flex: 1;
  text-align: center;
  line-height: 16px;
  padding-right: 4px;
  white-space: nowrap;
}

.tool {
  display: flex;
  flex-direction: column;
  align-items: center;
  line-height: 16px;
  padding-top: 1px;
  white-space: nowrap;
}

.tool > .caret {
  margin-top: 5px;
}

.tool > .i32 {
  margin-bottom: 3px;
}

.tool:disabled,
.sync-list button:disabled {
  color: #c0c0c0;
}

.tool-more {
  padding-top: 0;
}

.more-box {
  width: 38px;
  height: 35px;
  margin: -1px 0 2px;
  display: flex;
  align-items: center;
  justify-content: center;
  border: 1px solid #ececec;
  border-radius: 3px;
}

.mini {
  height: 22px;
  display: flex;
  align-items: center;
  justify-content: center;
}

.mini-on {
  background: #c8d8d6;
  border: 1px solid #a4bfbb;
}

.show-grid {
  display: grid;
  grid-template-columns: 23px 13px 24px 12px;
  grid-auto-rows: 22px;
  align-items: center;
  justify-items: stretch;
  padding-left: 9px;
  margin-top: -3px;
}

.show-grid .caret {
  justify-self: center;
}

.work-grid {
  display: grid;
  grid-template-columns: 25px 25px;
  grid-auto-rows: 22px;
  padding-left: 8px;
  margin: -3px 3px 0 0;
}

.group-geom .group-body {
  gap: 6px;
  padding-left: 9px;
}

.tool-point {
  width: 38px;
}

.group-sync .group-body {
  justify-content: space-between;
  padding: 0 4px 0 12px;
}

.sync-list button {
  height: 22px;
  display: flex;
  align-items: center;
  gap: 4px;
  white-space: nowrap;
}

.sync-list {
  margin-top: -4px;
}

.gc-rows {
  flex-direction: column;
  padding: 1px 0 0 3px;
}

.gc-row {
  display: flex;
  align-items: center;
  height: 30px;
}

.gc-row .i16 {
  margin: 0 4px 0 3px;
}

.gc-sep {
  width: 1px;
  height: 18px;
  margin: 0 3px;
  background: #d4d4d4;
}

.tool-find {
  align-items: flex-start;
  padding-left: 12px;
}

.tool-find .i32 {
  margin-left: 4px;
}

/* 选择条 */
.selbar {
  height: 32px;
  display: flex;
  align-items: center;
  border-bottom: 1px solid #7c9893;
}

.selbar > .caret {
  margin-left: 2px;
}

.selbar-prev {
  width: 100px;
  height: 20px;
  margin: 0 8px 0 229px;
  border: 1px solid #b0b0b0;
}

.selbar-icons {
  display: flex;
  align-items: center;
  padding-left: 5px;
}

.selbar-icons .i16 {
  margin: 0 4px;
}

.selbar-icons .caret {
  margin: 0 3px;
}

.selbar-icons_view {
  height: 24px;
  margin-left: 10px;
  padding: 0 5px 0 8px;
  border: solid #d4d4d4;
  border-width: 0 1px;
}

.selbar-icons_view .i16 {
  margin: 0 5px 0 4px;
}

/* 下拉框 */
.combo {
  width: 117px;
  height: 25px;
  display: flex;
  align-items: center;
  padding: 2px 6px 2px 2px;
  border: 1px solid #a6a6a6;
  background: #fff;
  line-height: 16px;
}

.combo::after {
  content: "";
  width: 7px;
  height: 4px;
  background: #111;
  clip-path: polygon(0 0, 100% 0, 50% 100%);
}

.combo select {
  appearance: none;
  flex: 1;
  min-width: 0;
  height: 100%;
  margin-right: 6px;
  padding-left: 2px;
  outline: 0;
  text-overflow: clip;
}

.combo-wide {
  width: 141px;
}

.combo-focus select {
  background: #3399ff;
  color: #fff;
  border: 1px dotted #d07020;
  padding-left: 1px;
}

.combo-off {
  width: 140px;
  height: 20px;
  font-size: 11px;
  padding: 0 4px 0 0;
}

.combo-off select {
  color: #a8a8a8;
  opacity: 1;
}

.combo-off::after {
  background: #a0a0a0;
}

/* 导航器和图形窗口 */
.work {
  flex: 1;
  display: flex;
}

.navigator {
  width: 290px;
  flex: none;
  display: flex;
  flex-direction: column;
  border-right: 1px solid #7c8c94;
}

.nav-title {
  height: 28px;
  line-height: 28px;
  text-indent: -6px;
}

.nav-head {
  height: 22px;
  background: #f0f0f0;
  border-top: 1px solid #ddd;
}

.nav-rows {
  flex: 1;
  position: relative;
  margin-right: 10px;
  border-right: 1px solid #d8d8d8;
  background: repeating-linear-gradient(#fff 0 19px, #e6e6e6 19px 20px, #fafafa 20px 39px, #e6e6e6 39px 40px);
}

.nav-row {
  height: 20px;
  line-height: 20px;
}

.nav-row_program {
  border-left: 1px solid #7a5c20;
}

.nav-row_folder::before {
  content: "";
  display: block;
  width: 12px;
  height: 12px;
  margin: 5px 0 0 3px;
  border: 1px solid #a88420;
  background: #f8e088;
}

.nav-row_dots {
  color: #888;
  line-height: 14px;
}

.nav-cols {
  position: absolute;
  inset: 0;
  display: grid;
  grid-template-columns: 95px 26px 29px 37px 28px;
}

.nav-cols i {
  border-right: 1px solid #e6e6e6;
}

.nav-cols i:first-child {
  border-color: #000;
}

.nav-scroll {
  height: 4px;
  margin-right: 10px;
  border-top: 1px solid #fff;
  background: linear-gradient(90deg, #cdcdcd 146px, #f0f0f0 146px);
}

.viewport {
  flex: 1;
  position: relative;
  background: linear-gradient(#000, #808080 82%);
}

.scene {
  position: absolute;
  inset: 0;
  width: 100%;
  height: 100%;
}

.scene-text {
  font: 13px "Liberation Sans", sans-serif;
}

.watermark {
  position: absolute;
  right: 2px;
  bottom: 2px;
  color: #e8e8e8;
  font: 16px "Liberation Serif", "Noto Sans CJK SC", serif;
  font-weight: 300;
  text-shadow: 1px 1px 0 #333;
}

/* 对话框 */
.dialog {
  position: absolute;
  left: 6px;
  top: 0;
  width: 328px;
  background: #e7e7e7;
}

.dialog-title {
  height: 23px;
  display: flex;
  align-items: center;
  gap: 9px;
  padding: 0 9px 0 7px;
  background: #5d8a84;
  color: #fff;
  font-size: 13px;
}

.dialog-title span {
  flex: 1;
  line-height: 22px;
}

.dialog-close svg {
  width: 12px;
  height: 12px;
}

.dialog-body {
  padding: 4px 5px 10px;
  border: 1px solid #b8b8b8;
  border-top: 0;
}

.panel {
  margin-bottom: 3px;
  background: #fff;
  border-bottom: 1px solid #bcbcbc;
}

.panel h2,
.panel h3 {
  display: flex;
  align-items: center;
  justify-content: space-between;
  margin: 0;
  font-weight: normal;
  color: #2b86b6;
}

.panel h2 {
  height: 23px;
  padding: 2px 6px 0 7px;
  font-size: 14px;
  line-height: 20px;
}

.panel h3 {
  height: 24px;
  padding: 0 5px 2px 7px;
  font-size: 12px;
  background: #f0f6f6;
  border: 1px solid #d4dada;
}

.chev {
  width: 12px;
  height: 9px;
}

.panel-body {
  display: flex;
  flex-direction: column;
  gap: 2px;
  padding: 7px 9px 8px;
}

.row {
  height: 32px;
  display: flex;
  gap: 2px;
  line-height: 36px;
}

.row > :first-child {
  flex: 1;
}

.row-field {
  line-height: 25px;
}

.btn {
  width: 32px;
  height: 32px;
  flex: none;
  display: flex;
  align-items: center;
  justify-content: center;
  border: 1px solid #a6a6a6;
  background: #fff;
}

.btn svg {
  width: 24px;
  height: 24px;
}

.btn:disabled {
  border-color: #d0d0d0;
}

.btn:disabled svg {
  filter: grayscale(0.8);
  opacity: 0.5;
}

.actions {
  display: flex;
  justify-content: center;
  gap: 2px;
}

.collapse {
  height: 14px;
  display: flex;
  justify-content: center;
  align-items: center;
  border-bottom: 1px solid #cfcfcf;
}

.collapse i {
  width: 10px;
  height: 5px;
  background: #111;
  clip-path: polygon(50% 0, 100% 100%, 0 100%);
}

.dialog-foot {
  display: flex;
  justify-content: flex-end;
  gap: 5px;
  padding: 8px 10px 0 0;
}

.dialog-foot button {
  width: 54px;
  height: 25px;
  border: 1px solid #a8a8a8;
  background: #c9c9ce;
}

.dialog-foot .ok {
  background: #9bcce6;
  border-color: #4aa0d0;
}
```
